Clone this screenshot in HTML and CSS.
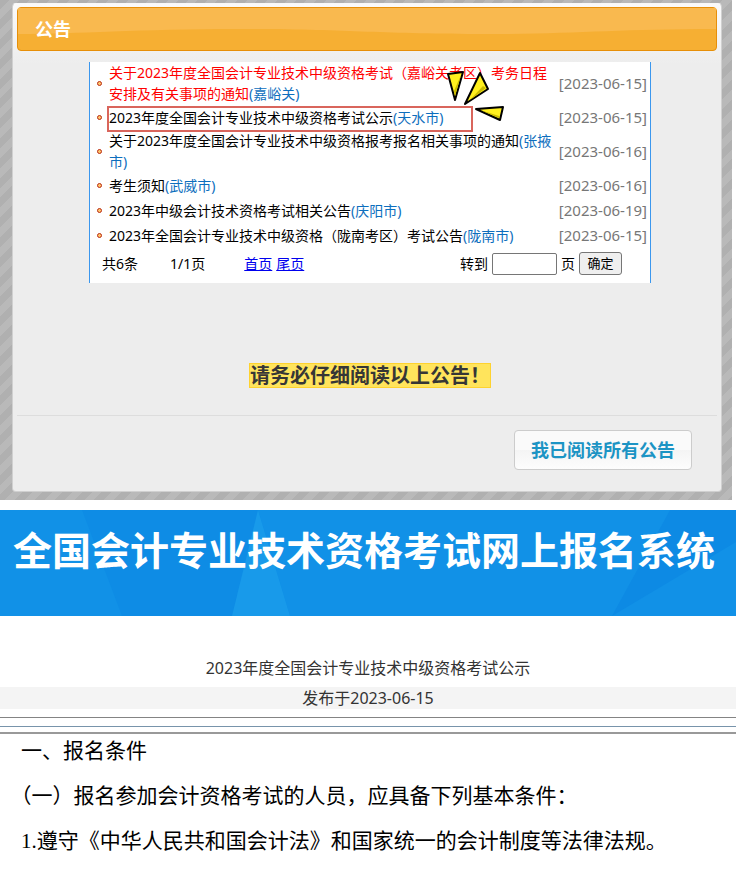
FILE: index.html
```html
<!DOCTYPE html>
<html lang="zh-CN">
<head>
<meta charset="utf-8">
<title>全国会计专业技术资格考试网上报名系统</title>
<link rel="stylesheet" href="styles.css">
</head>
<body>
<section class="backdrop">
  <div class="dialog">
    <h2 class="dialog-title">公告
      <svg class="gloss" viewBox="0 0 700 42" preserveAspectRatio="none" aria-hidden="true"><path d="M0 0H700V21C600 21 560 26 470 26C360 26 330 21 220 21C120 21 60 26 0 26Z"/></svg>
    </h2>
    <div class="notices">
      <table class="list">
        <tbody>
          <tr><td class="dot"></td><td class="name"><a class="hot" href="#">关于2023年度全国会计专业技术中级资格考试（嘉峪关考区）考务日程安排及有关事项的通知<span>(嘉峪关)</span></a></td><td class="date">[2023-06-15]</td></tr>
          <tr><td class="dot"></td><td class="name marked"><a href="#">2023年度全国会计专业技术中级资格考试公示<span>(天水市)</span></a>
            <div class="frame">
              <svg class="burst" viewBox="0 0 60 54" aria-hidden="true">
                <g fill="#fff01e" stroke="#000" stroke-width="2" stroke-linejoin="round"><path d="M2 4L17 2L9 30Z"/><path d="M34 3L42 19L19 34Z"/><path d="M30 39L57 37L54 50Z"/></g>
                <g fill="#c9ba00"><path d="M15 5L9 26L8 21Z"/><path d="M40 18L24 30L37 16Z"/><path d="M34 40L53 46L53 48Z"/></g>
              </svg>
            </div></td><td class="date">[2023-06-15]</td></tr>
          <tr><td class="dot"></td><td class="name"><a href="#">关于2023年度全国会计专业技术中级资格报考报名相关事项的通知<span>(张掖市)</span></a></td><td class="date">[2023-06-16]</td></tr>
          <tr><td class="dot"></td><td class="name"><a href="#">考生须知<span>(武威市)</span></a></td><td class="date">[2023-06-16]</td></tr>
          <tr><td class="dot"></td><td class="name"><a href="#">2023年中级会计技术资格考试相关公告<span>(庆阳市)</span></a></td><td class="date">[2023-06-19]</td></tr>
          <tr><td class="dot"></td><td class="name"><a href="#">2023年全国会计专业技术中级资格（陇南考区）考试公告<span>(陇南市)</span></a></td><td class="date">[2023-06-15]</td></tr>
        </tbody>
      </table>
      <form class="pager">
        <span class="total">共6条</span>
        <span class="current">1/1页</span>
        <a href="#">首页</a>
        <a href="#">尾页</a>
        <label class="jump" for="page">转到</label>
        <input id="page" type="text">
        <label for="page">页</label>
        <button type="button">确定</button>
      </form>
    </div>
    <p class="reminder"><strong>请务必仔细阅读以上公告！</strong></p>
    <div class="actions"><button type="button" class="confirm">我已阅读所有公告</button></div>
  </div>
</section>
<header class="banner">
  <svg class="facets" viewBox="0 0 736 106" preserveAspectRatio="none" aria-hidden="true">
    <path fill="#0e8ce5" d="M82 0H258L290 106H122Z"/><path fill="#189aea" d="M258 0L290 106H232Z"/><path fill="#0d8ae4" d="M670 0H736V32L612 106Z"/>
  </svg>
  <h1>全国会计专业技术资格考试网上报名系统</h1>
</header>
<main class="article">
  <h2>2023年度全国会计专业技术中级资格考试公示</h2>
  <p class="published">发布于2023-06-15</p>
  <hr class="rule">
  <hr class="rule blue">
  <hr class="rule thick">
  <div class="content">
    <p>一、报名条件</p>
    <p>（一）报名参加会计资格考试的人员，应具备下列基本条件：</p>
    <p><span class="num">1.</span>遵守《中华人民共和国会计法》和国家统一的会计制度等法律法规。</p>
  </div>
</main>
</body>
</html>
```
FILE: styles.css
```css
* { box-sizing: border-box; }
body {
  margin: 0;
  background: #fff;
  color: #000;
  font: 14px/21px "Noto Sans", "Noto Sans CJK SC", sans-serif;
}
h1, h2, p { margin: 0; }
input, button { font: inherit; }

.backdrop {
  margin: 0 4px 10px 0;
  padding: 3px 10px 8px 12px;
  background: repeating-linear-gradient(135deg, #b0b0b0 0 7px, #b9b9b9 7px 14px);
}
.dialog {
  padding: 3px 4px 21px;
  border: 1px solid #d0d0d0;
  border-top-color: #f8f8f8;
  border-radius: 4px;
  background: linear-gradient(#fafafa, #ededed 60px);
}
.dialog-title {
  position: relative;
  padding: 0 17px;
  border: 1px solid #e78f08;
  border-radius: 4px;
  background: #f6af33;
  color: #fff;
  font-size: 18px;
  line-height: 42px;
  isolation: isolate;
}
.gloss {
  position: absolute;
  inset: 0;
  z-index: -1;
  width: 100%;
  height: 100%;
  fill: #f9b94f;
}

.notices {
  margin: 11px 66px 0 72px;
  border: solid #3b97ee;
  border-width: 0 1px;
  background: #fff;
}
.list { width: 100%; border-collapse: collapse; }
.list td { height: 25px; padding: 0 0 1px; }
.list a { color: #000; text-decoration: none; }
.list a.hot { color: #f00; }
.list span { color: #0d6ebd; }
.list .dot { width: 19px; padding-left: 7px; }
.dot::before {
  content: "";
  display: block;
  width: 3px;
  height: 3px;
  border: 1px solid #b92a12;
  border-radius: 3px;
  background: #ffc76b;
}
.list .name { padding-right: 5px; }
.list .date {
  width: 91px;
  padding-right: 3px;
  color: #777;
  font-size: 15px;
  text-align: right;
  white-space: nowrap;
}
.marked { position: relative; }
.frame {
  position: absolute;
  top: 1px;
  left: -2px;
  width: 366px;
  height: 26px;
  border: 2px solid #d9655c;
  pointer-events: none;
}
.burst {
  position: absolute;
  top: -38px;
  right: -35px;
  width: 60px;
  height: 54px;
}

.pager {
  display: flex;
  align-items: center;
  gap: 4px;
  height: 35px;
  padding: 0 28px 4px 12px;
}
.pager a { color: #00e; }
.pager .total { margin-right: 28px; }
.pager .current { margin-right: 35px; }
.pager .jump { margin-left: auto; }
.pager input {
  width: 65px;
  height: 22px;
  border: 1px solid #767676;
  border-radius: 2px;
}
.pager button {
  width: 43px;
  height: 23px;
  padding: 0;
  border: 1px solid #767676;
  border-radius: 3px;
  background: #efefef;
  font-size: 13px;
  line-height: 21px;
}

.reminder { margin-top: 80px; text-align: center; }
.reminder strong {
  display: inline-block;
  margin-left: 6px;
  border: 1px solid #fed22f;
  background: #ffe45c;
  color: #363636;
  font-size: 20px;
  line-height: 23px;
}
.actions {
  display: flex;
  justify-content: flex-end;
  margin-top: 27px;
  padding: 14px 25px 0;
  border-top: 1px solid #ddd;
}
.confirm {
  height: 40px;
  padding: 0 16px;
  border: 1px solid #ccc;
  border-radius: 4px;
  background: linear-gradient(#fafafa 50%, #f4f4f4 50%, #fdfdfd);
  color: #1c94c4;
  font-size: 18px;
  font-weight: bold;
}

.banner {
  position: relative;
  height: 106px;
  overflow: hidden;
  background: #1191e7;
  isolation: isolate;
}
.facets {
  position: absolute;
  inset: 0;
  z-index: -1;
  width: 100%;
  height: 100%;
}
.banner h1 {
  padding-left: 13px;
  color: #fff;
  font-size: 39px;
  line-height: 80px;
  white-space: nowrap;
}

.article { padding-top: 40px; }
.article h2, .published {
  color: #333;
  font-size: 16px;
  font-weight: normal;
  text-align: center;
}
.article h2 { margin-bottom: 7px; line-height: 24px; }
.published { background: #f4f4f4; line-height: 22px; }
.rule { margin: 8px 0; border: 0; border-top: 1px solid #848484; }
.rule.blue { margin-bottom: 5px; border-color: #7894ab; }
.rule.thick { margin: 0; border-top: 2px solid #999; }
.content { padding: 0 21px; font-size: 21px; line-height: 45px; }
.content p { text-spacing-trim: trim-start; }
.content p:first-child { margin-top: -6px; }
.num { font-family: "Liberation Serif", serif; }
```
